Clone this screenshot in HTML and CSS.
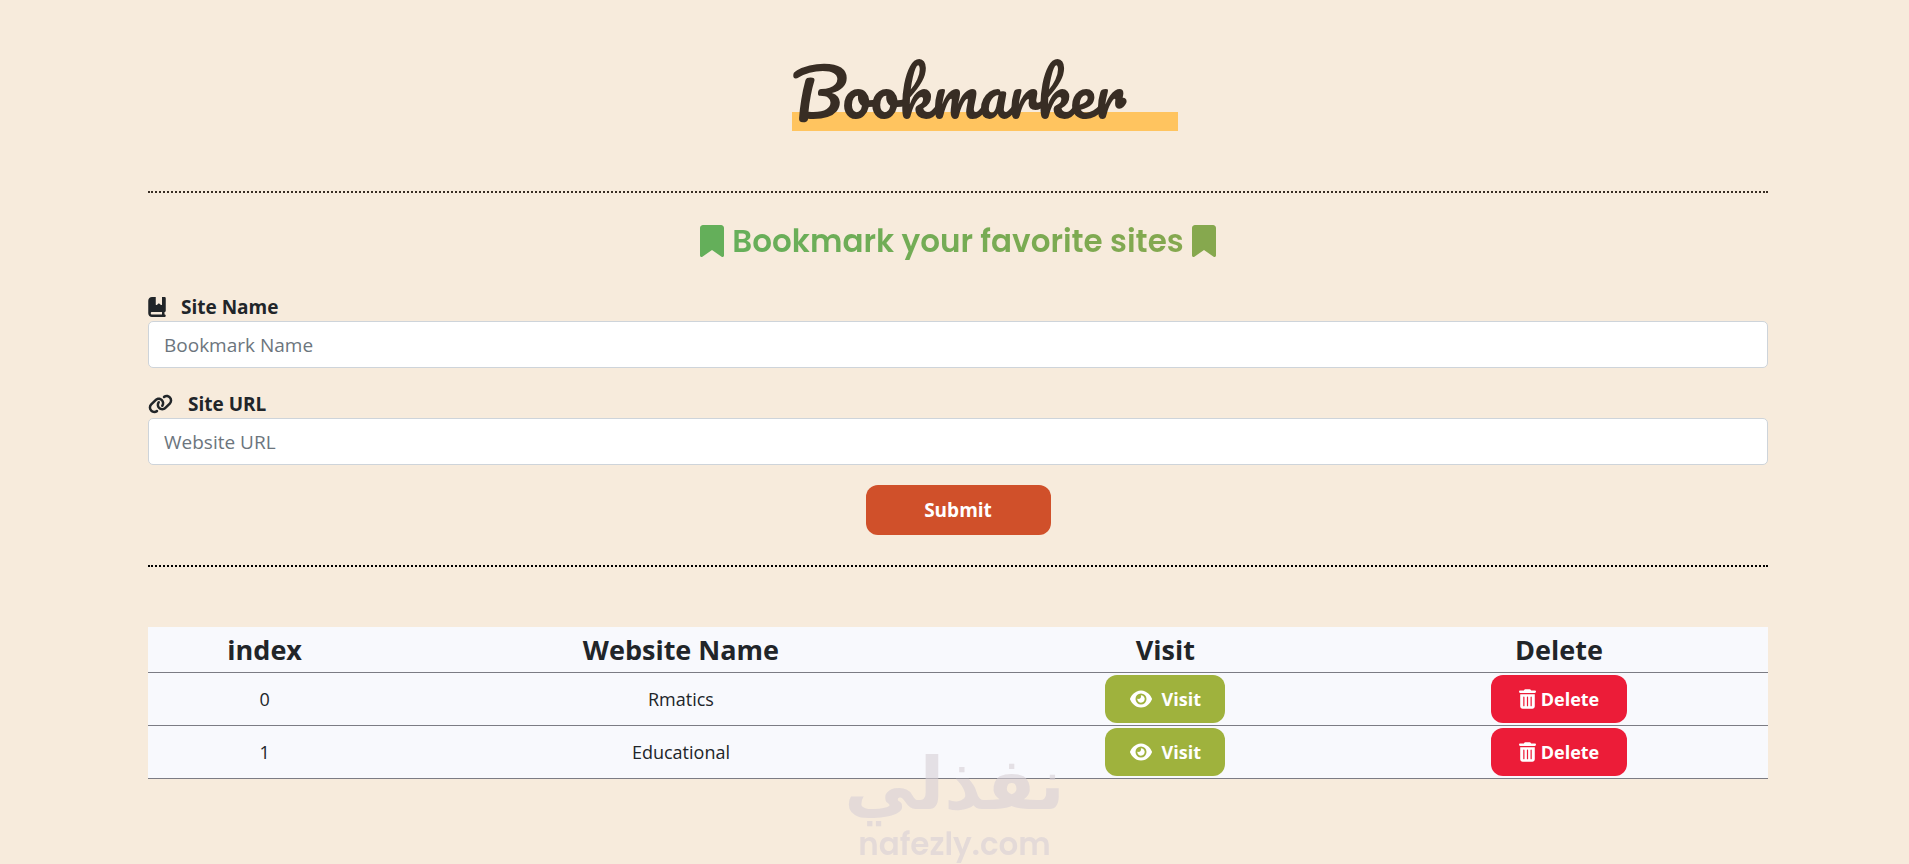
FILE: index.html
```html
<!DOCTYPE html>
<html lang="en">
<head>
  <meta charset="UTF-8">
  <meta name="viewport" content="width=device-width, initial-scale=1.0">
  <title>Bookmarker</title>
  <link rel="stylesheet" href="styles.css">
</head>
<body>
  <!-- Shared icons -->
  <svg class="sprite" aria-hidden="true">
    <symbol id="bookmark" viewBox="0 0 384 512">
      <path d="M0 48V487.7C0 501.1 10.9 512 24.3 512c5 0 9.9-1.5 14-4.4L192 400 345.7 507.6c4.1 2.9 9 4.4 14 4.4c13.4 0 24.3-10.9 24.3-24.3V48c0-26.5-21.5-48-48-48H48C21.5 0 0 21.5 0 48z"/>
    </symbol>
    <symbol id="book" viewBox="0 0 448 512">
      <path d="M0 96C0 43 43 0 96 0h96V190.7c0 13.4 15.5 20.9 26 12.5L272 160l54 43.2c10.5 8.4 26 .9 26-12.5V0h32 32c17.7 0 32 14.3 32 32V352c0 17.7-14.3 32-32 32v64c17.7 0 32 14.3 32 32s-14.3 32-32 32H384 96c-53 0-96-43-96-96V96zM64 416c0 17.7 14.3 32 32 32H352V384H96c-17.7 0-32 14.3-32 32z"/>
    </symbol>
    <symbol id="link" viewBox="0 0 640 512">
      <path d="M579.8 267.7c56.5-56.5 56.5-148 0-204.5c-50-50-128.8-56.5-186.3-15.4l-1.6 1.1c-14.4 10.3-17.7 30.3-7.4 44.6s30.3 17.7 44.6 7.4l1.6-1.1c32.1-22.9 76-19.3 103.8 8.6c31.5 31.5 31.5 82.5 0 114L422.3 334.8c-31.5 31.5-82.5 31.5-114 0c-27.9-27.9-31.5-71.8-8.6-103.8l1.1-1.6c10.3-14.4 6.9-34.4-7.4-44.6s-34.4-6.9-44.6 7.4l-1.1 1.6C206.5 251.2 213 330 263 380c56.5 56.5 148 56.5 204.5 0L579.8 267.7zM60.2 244.3c-56.5 56.5-56.5 148 0 204.5c50 50 128.8 56.5 186.3 15.4l1.6-1.1c14.4-10.3 17.7-30.3 7.4-44.6s-30.3-17.7-44.6-7.4l-1.6 1.1c-32.1 22.9-76 19.3-103.8-8.6C74 372 74 321 105.5 289.5L217.7 177.2c31.5-31.5 82.5-31.5 114 0c27.9 27.9 31.5 71.8 8.6 103.9l-1.1 1.6c-10.3 14.4-6.9 34.4 7.4 44.6s34.4 6.9 44.6-7.4l1.1-1.6C433.5 260.8 427 182 377 132c-56.5-56.5-148-56.5-204.5 0L60.2 244.3z"/>
    </symbol>
    <symbol id="eye" viewBox="0 0 576 512">
      <path d="M288 32c-80.8 0-145.5 36.8-192.6 80.6C48.6 156 17.3 208 2.5 243.7c-3.3 7.9-3.3 16.7 0 24.6C17.3 304 48.6 356 95.4 399.4C142.5 443.2 207.2 480 288 480s145.5-36.8 192.6-80.6c46.8-43.5 78.1-95.4 93-131.1c3.3-7.9 3.3-16.7 0-24.6c-14.9-35.7-46.2-87.7-93-131.1C433.5 68.8 368.8 32 288 32zM144 256a144 144 0 1 1 288 0 144 144 0 1 1 -288 0zm144-64c0 35.3-28.7 64-64 64c-7.1 0-13.9-1.2-20.3-3.3c-5.5-1.8-11.9 1.6-11.7 7.4c.3 6.9 1.3 13.8 3.2 20.7c13.7 51.2 66.4 81.6 117.6 67.9s81.6-66.4 67.9-117.6c-11.1-41.5-47.8-69.4-88.6-71.1c-5.8-.2-9.2 6.1-7.4 11.7c2.1 6.4 3.3 13.2 3.3 20.3z"/>
    </symbol>
    <symbol id="trash" viewBox="0 0 448 512">
      <path d="M135.2 17.7L128 32H32C14.3 32 0 46.3 0 64S14.3 96 32 96H416c17.7 0 32-14.3 32-32s-14.3-32-32-32H320l-7.2-14.3C307.4 6.8 296.3 0 284.2 0H163.8c-12.1 0-23.2 6.8-28.6 17.7zM32 128V448c0 35.3 28.7 64 64 64H352c35.3 0 64-28.7 64-64V128H32zm96 64c8.8 0 16 7.2 16 16V432c0 8.8-7.2 16-16 16s-16-7.2-16-16V208c0-8.8 7.2-16 16-16zm96 0c8.8 0 16 7.2 16 16V432c0 8.8-7.2 16-16 16s-16-7.2-16-16V208c0-8.8 7.2-16 16-16zm96 0c8.8 0 16 7.2 16 16V432c0 8.8-7.2 16-16 16s-16-7.2-16-16V208c0-8.8 7.2-16 16-16z"/>
    </symbol>
  </svg>

  <header class="header">
    <h1 class="title">Bookmarker</h1>
  </header>

  <!-- Form Section -->
  <main class="container">
    <form class="bookmark-form">
      <h2 class="subtitle">
        <svg class="mark mark-start"><use href="#bookmark"/></svg>
        <span>Bookmark your favorite sites</span>
        <svg class="mark mark-end"><use href="#bookmark"/></svg>
      </h2>

      <div class="field">
        <label for="siteName"><svg class="icon-book"><use href="#book"/></svg>Site Name</label>
        <input type="text" id="siteName" placeholder="Bookmark Name">
      </div>
      <div class="field">
        <label for="siteUrl"><svg class="icon-link"><use href="#link"/></svg>Site URL</label>
        <input type="text" id="siteUrl" placeholder="Website URL">
      </div>

      <button class="btn btn-submit" type="button">Submit</button>
    </form>

    <!-- Bookmarks Section -->
    <table class="bookmarks">
      <thead>
        <tr>
          <th class="col-index">index</th>
          <th class="col-name">Website Name</th>
          <th class="col-visit">Visit</th>
          <th class="col-delete">Delete</th>
        </tr>
      </thead>
      <tbody>
        <tr>
          <td>0</td>
          <td>Rmatics</td>
          <td><button class="btn btn-visit" type="button"><svg class="icon-eye"><use href="#eye"/></svg>Visit</button></td>
          <td><button class="btn btn-delete" type="button"><svg class="icon-trash"><use href="#trash"/></svg>Delete</button></td>
        </tr>
        <tr>
          <td>1</td>
          <td>Educational</td>
          <td><button class="btn btn-visit" type="button"><svg class="icon-eye"><use href="#eye"/></svg>Visit</button></td>
          <td><button class="btn btn-delete" type="button"><svg class="icon-trash"><use href="#trash"/></svg>Delete</button></td>
        </tr>
      </tbody>
    </table>
  </main>

  <div class="watermark">
    <span class="watermark-ar" lang="ar" dir="rtl">نفذلي</span>
    <span class="watermark-en">nafezly.com</span>
  </div>
</body>
</html>
```
FILE: styles.css
```css
* {
  margin: 0;
  padding: 0;
  box-sizing: border-box;
}

body {
  position: relative;
  min-height: 100vh;
  background: #f7ebdc;
  color: #212529;
  font-family: 'Segoe UI', 'Open Sans', sans-serif;
  font-size: 18px;
  overflow-x: hidden;
}

svg {
  fill: currentColor;
  flex: none;
}

.sprite {
  display: none;
}

/* Header */
.header {
  display: flex;
  justify-content: center;
  padding: 41px 0 60px 61px;
}

.title {
  width: 386px;
  height: 90px;
  background: linear-gradient(#ffc45f, #ffc45f) bottom / 100% 19px no-repeat;
  color: #382d24;
  font-family: 'Pacifico', 'Lato', cursive;
  font-size: 63px;
  font-weight: 400;
  line-height: 104px;
}

.container {
  padding: 0 141px 0 148px;
}

/* Form */
.bookmark-form {
  display: flex;
  flex-direction: column;
  border-top: 2px dotted #382d24;
  border-bottom: 2px dotted #000;
  padding: 24px 0 30px;
  margin-bottom: 60px;
}

.subtitle {
  display: flex;
  justify-content: center;
  align-items: center;
  gap: 8px;
  margin-bottom: 26px;
  font-family: 'Poppins', 'Inter', sans-serif;
  font-size: 31px;
  font-weight: 600;
  line-height: 48px;
}

.subtitle span {
  background: linear-gradient(to right, #66af5a, #85a84f);
  -webkit-background-clip: text;
  background-clip: text;
  color: transparent;
}

.mark {
  width: 24px;
  height: 32px;
}

.mark-start {
  color: #64af5a;
}

.mark-end {
  color: #86a84e;
}

.field {
  margin-bottom: 20px;
}

.field label {
  display: flex;
  align-items: center;
  gap: 15px;
  padding-top: 2px;
  font-size: 19px;
  font-weight: 700;
  line-height: 28px;
}

.icon-book {
  width: 18px;
  height: 20px;
}

.icon-link {
  width: 25px;
  height: 20px;
}

.field input {
  display: block;
  width: 100%;
  height: 47px;
  padding: 0 15px;
  background: #fff;
  border: 1px solid #ced4da;
  border-radius: 5px;
  color: #212529;
  font-family: inherit;
  font-size: 19px;
}

.field input::placeholder {
  color: #6c757d;
}

/* Buttons */
.btn {
  display: inline-flex;
  align-items: center;
  justify-content: center;
  height: 48px;
  border: none;
  border-radius: 12px;
  color: #fff;
  font-family: inherit;
  font-size: 18px;
  font-weight: 700;
  cursor: pointer;
}

.btn-submit {
  align-self: center;
  width: 185px;
  height: 50px;
  background: #d0502a;
  font-size: 19px;
}

.btn-visit {
  width: 120px;
  gap: 10px;
  background: #9fb23d;
}

.btn-delete {
  width: 136px;
  gap: 5px;
  background: #ec1c38;
}

.icon-eye {
  width: 22px;
  height: 20px;
}

.icon-trash {
  width: 17px;
  height: 20px;
}

/* Table */
.bookmarks {
  width: 100%;
  table-layout: fixed;
  border-collapse: collapse;
  background: #f8f9fd;
  text-align: center;
}

.bookmarks tr {
  border-bottom: 1px solid #7c7c84;
}

.bookmarks th {
  height: 45px;
  font-size: 27px;
  line-height: 45px;
}

.bookmarks td {
  height: 53px;
  vertical-align: middle;
}

.bookmarks td .btn {
  vertical-align: middle;
}

.col-index {
  width: 14.4%;
}

.col-name {
  width: 37%;
}

.col-visit {
  width: 22.8%;
}

.col-delete {
  width: 25.8%;
}

/* Watermark */
.watermark {
  position: absolute;
  left: 50%;
  bottom: 0;
  display: flex;
  flex-direction: column;
  align-items: center;
  transform: translateX(-50%);
  color: #d8d0d6;
  opacity: 0.6;
  font-weight: 700;
  pointer-events: none;
}

.watermark-ar {
  font-family: 'DejaVu Sans', sans-serif;
  font-size: 72px;
  line-height: 80px;
}

.watermark-en {
  font-family: 'Poppins', 'Inter', sans-serif;
  font-size: 31px;
  font-weight: 600;
  line-height: 40px;
}
```
